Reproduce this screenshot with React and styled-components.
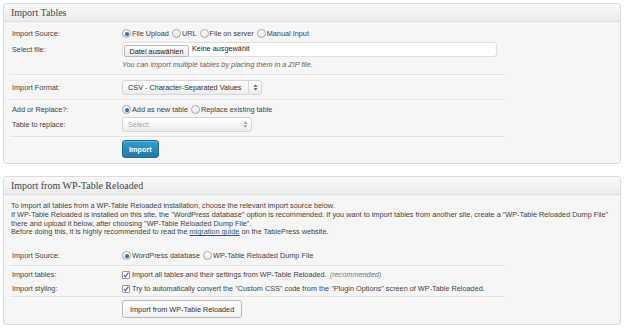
import styled, { createGlobalStyle } from "styled-components";

const GlobalStyle = createGlobalStyle`
  body {
    margin: 0;
    background: #fff;
    font-family: "Liberation Sans", Arial, sans-serif;
    font-size: 7.3px;
    color: #333;
  }
`;

const Radio = ({ checked, children }) => (
  <Choice>
    <RadioDot $checked={checked} />
    {children}
  </Choice>
);

const Check = ({ children }) => (
  <Choice>
    <CheckBox>
      <svg width="8" height="8" viewBox="0 0 8 8">
        <path d="M1.2 4.2 L3.2 6.4 L7.2 0.8" fill="none" stroke="#2b6fb5" strokeWidth="1.6" />
      </svg>
    </CheckBox>
    {children}
  </Choice>
);

const Arrows = () => (
  <svg width="5" height="7" viewBox="0 0 5 7">
    <path d="M2.5 0.5 L4.5 2.8 L0.5 2.8 Z M2.5 6.5 L4.5 4.2 L0.5 4.2 Z" fill="#555" />
  </svg>
);

const App = () => {
  return (
    <Page>
      <GlobalStyle />

      <Postbox>
        <Header>Import Tables</Header>
        <Inside>
          <Group $top={5} $bottom={4}>
            <Row>
              <Label>Import Source:</Label>
              <Field>
                <Radio checked>File Upload</Radio>
                <Radio>URL</Radio>
                <Radio>File on server</Radio>
                <Radio>Manual Input</Radio>
              </Field>
            </Row>
            <Row $mt={2}>
              <Label>Select file:</Label>
              <FileBox>
                <FileButton>Datei auswählen</FileButton>
                <FileName>Keine ausgewählt</FileName>
              </FileBox>
            </Row>
            <Row>
              <span />
              <Hint>You can import multiple tables by placing them in a ZIP file.</Hint>
            </Row>
          </Group>

          <Group $top={5} $bottom={4}>
            <Row>
              <Label>Import Format:</Label>
              <Select $width={140}>
                <span>CSV - Character-Separated Values</span>
                <ArrowBox>
                  <Arrows />
                </ArrowBox>
              </Select>
            </Row>
          </Group>

          <Group $top={3} $bottom={4}>
            <Row>
              <Label>Add or Replace?:</Label>
              <Field>
                <Radio checked>Add as new table</Radio>
                <Radio>Replace existing table</Radio>
              </Field>
            </Row>
            <Row $mt={1}>
              <Label>Table to replace:</Label>
              <Select $width={130} $disabled>
                <span>Select:</span>
                <ArrowBox $plain>
                  <Arrows />
                </ArrowBox>
              </Select>
            </Row>
          </Group>

          <Actions $top={3} $bottom={5}>
            <PrimaryButton>Import</PrimaryButton>
          </Actions>
        </Inside>
      </Postbox>

      <Postbox>
        <Header>Import from WP-Table Reloaded</Header>
        <Inside>
          <Intro>
            To import all tables from a WP-Table Reloaded installation, choose the relevant import source below.
            <br />
            If WP-Table Reloaded is installed on this site, the "WordPress database" option is recommended. If you want to import tables from another site, create a "WP-Table Reloaded Dump File"
            <br />
            there and upload it below, after choosing "WP-Table Reloaded Dump File".
            <br />
            Before doing this, it is highly recommended to read the <a href="#guide">migration guide</a> on the TablePress website.
          </Intro>

          <Group $top={4} $bottom={3}>
            <Row>
              <Label>Import Source:</Label>
              <Field>
                <Radio checked>WordPress database</Radio>
                <Radio>WP-Table Reloaded Dump File</Radio>
              </Field>
            </Row>
          </Group>

          <Group $top={2} $bottom={1}>
            <Row>
              <Label>Import tables:</Label>
              <Field>
                <Check>
                  Import all tables and their settings from WP-Table Reloaded.&nbsp;<em>(recommended)</em>
                </Check>
              </Field>
            </Row>
            <Row $mt={1}>
              <Label>Import styling:</Label>
              <Field>
                <Check>
                  Try to automatically convert the "Custom CSS" code from the "Plugin Options" screen of WP-Table Reloaded.
                </Check>
              </Field>
            </Row>
          </Group>

          <Actions $top={3} $bottom={6}>
            <SecondaryButton>Import from WP-Table Reloaded</SecondaryButton>
          </Actions>
        </Inside>
      </Postbox>
    </Page>
  );
};

const Page = styled.div`
  padding: 3px 4px 0 3px;
`;

const Postbox = styled.section`
  border: 1px solid #dcdcdc;
  border-radius: 3px;
  background: #f5f5f5;

  & + & {
    margin-top: 12px;
  }
`;

const Header = styled.h3`
  margin: 0;
  height: 17px;
  line-height: 17px;
  padding-left: 7px;
  border-bottom: 1px solid #dfdfdf;
  border-radius: 3px 3px 0 0;
  background: linear-gradient(#f9f9f9, #ebebeb);
  font-family: "Liberation Serif", "Times New Roman", serif;
  font-size: 10px;
  font-weight: normal;
  color: #464646;
`;

const Inside = styled.div`
  padding: 0 6px;
`;

const Group = styled.div`
  width: 495px;
  padding: ${({ $top }) => $top}px 0 ${({ $bottom }) => $bottom}px;
  border-bottom: 1px solid #e1e1e1;
  box-shadow: 0 1px 0 #fbfbfb;
`;

const Row = styled.div`
  display: grid;
  grid-template-columns: 112px 1fr;
  align-items: center;
  min-height: 13px;
  margin-top: ${({ $mt }) => $mt || 0}px;
`;

const Label = styled.div`
  padding-left: 2px;
  color: #444;
`;

const Field = styled.div`
  display: flex;
  align-items: center;
  gap: 3px;
`;

const Choice = styled.label`
  display: inline-flex;
  align-items: center;
  gap: 1px;
  color: #444;
  white-space: nowrap;

  em {
    color: #777;
  }
`;

const RadioDot = styled.span`
  position: relative;
  width: 7px;
  height: 7px;
  border: 1px solid #a9a9a9;
  border-radius: 50%;
  background: linear-gradient(#fff, #e6e6e6);

  &::after {
    content: "";
    display: ${({ $checked }) => ($checked ? "block" : "none")};
    position: absolute;
    left: 1.5px;
    top: 1.5px;
    width: 4px;
    height: 4px;
    border-radius: 50%;
    background: radial-gradient(circle at 40% 35%, #4a8ad0, #17407a);
  }
`;

const CheckBox = styled.span`
  display: flex;
  width: 8px;
  height: 8px;
  margin-right: 1px;
  border: 1px solid #9a9a9a;
  border-radius: 1px;
  background: #fff;
  box-sizing: border-box;
  overflow: visible;

  svg {
    margin: -1px 0 0 0;
  }
`;

const FileBox = styled.div`
  display: flex;
  align-items: flex-start;
  width: 375px;
  height: 15px;
  box-sizing: border-box;
  padding: 2px 0 0 1px;
  border: 1px solid #dfdfdf;
  border-radius: 3px;
  background: #fff;
`;

const FileButton = styled.span`
  display: flex;
  align-items: center;
  justify-content: center;
  width: 63px;
  height: 10px;
  border: 1px solid #b9b9b9;
  border-radius: 2px;
  background: linear-gradient(#fdfdfd, #ececec);
  color: #222;
  white-space: nowrap;
`;

const FileName = styled.span`
  margin: -1px 0 0 3px;
  color: #222;
`;

const Hint = styled.div`
  margin-top: 1px;
  line-height: 9px;
  font-style: italic;
  color: #666;
`;

const Select = styled.div`
  display: flex;
  align-items: center;
  justify-content: space-between;
  width: ${({ $width }) => $width}px;
  height: 15px;
  box-sizing: border-box;
  padding-left: 5px;
  border: 1px solid #d6d6d6;
  border-radius: 3px;
  background: linear-gradient(#ffffff, #ececec);
  color: ${({ $disabled }) => ($disabled ? "#a5a5a5" : "#333")};
  white-space: nowrap;
`;

const ArrowBox = styled.span`
  display: flex;
  align-items: center;
  justify-content: center;
  flex: 0 0 12px;
  height: 100%;
  border-left: ${({ $plain }) => ($plain ? "none" : "1px solid #d6d6d6")};
  opacity: ${({ $plain }) => ($plain ? 0.6 : 1)};
`;

const Actions = styled.div`
  padding: ${({ $top }) => $top}px 0 ${({ $bottom }) => $bottom}px 112px;
`;

const PrimaryButton = styled.button`
  height: 18px;
  padding: 0 6px;
  border: 1px solid #1f6c93;
  border-radius: 3px;
  background: linear-gradient(#2ea0d3, #1f79a8);
  box-shadow: inset 0 1px 0 rgba(120, 200, 235, 0.6);
  font-family: "Liberation Sans", Arial, sans-serif;
  font-size: 7.3px;
  font-weight: bold;
  color: #fff;
`;

const SecondaryButton = styled.button`
  height: 18px;
  padding: 0 7px;
  border: 1px solid #bbb;
  border-radius: 3px;
  background: linear-gradient(#fefefe, #f1f1f1);
  font-family: "Liberation Sans", Arial, sans-serif;
  font-size: 7.3px;
  color: #333;
`;

const Intro = styled.p`
  margin: 7px 0 8px 1px;
  line-height: 8.75px;
  color: #444;
  white-space: nowrap;

  a {
    color: #2a5a84;
  }
`;

export default App;
